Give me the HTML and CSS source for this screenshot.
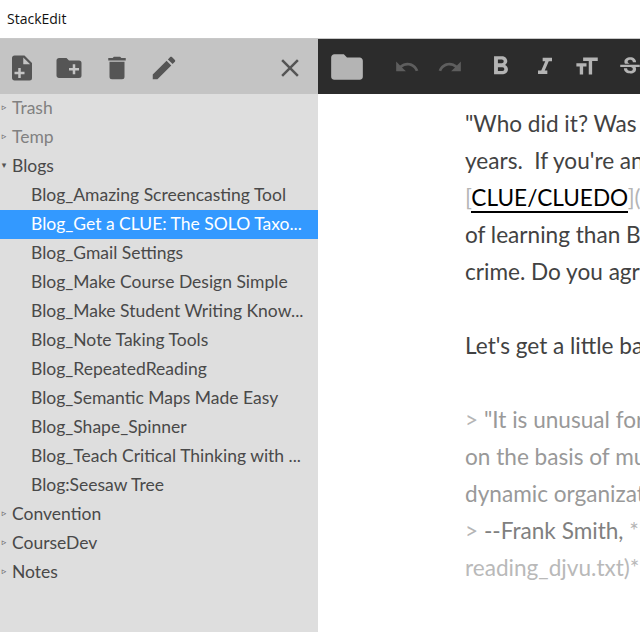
FILE: index.html
```html
<!DOCTYPE html>
<html lang="en">
<head>
<meta charset="utf-8">
<title>StackEdit</title>
<link rel="stylesheet" href="styles.css">
</head>
<body>
<div class="window">
  <header class="titlebar">StackEdit</header>
  <div class="main">
    <aside class="sidebar">
      <div class="side-tools">
        <svg class="ico" viewBox="0 0 24 24"><path d="M13,9H18.5L13,3.5V9M6,2H14L20,8V20A2,2 0 0,1 18,22H6C4.89,22 4,21.1 4,20V4C4,2.89 4.89,2 6,2M11,15V12H9V15H6V17H9V20H11V17H14V15H11Z"/></svg>
        <svg class="ico" viewBox="0 0 24 24"><path d="M10,4L12,6H20A2,2 0 0,1 22,8V18A2,2 0 0,1 20,20H4C2.89,20 2,19.1 2,18V6C2,4.89 2.89,4 4,4H10M15,9V12H12V14H15V17H17V14H20V12H17V9H15Z"/></svg>
        <svg class="ico" viewBox="0 0 24 24"><path d="M19,4H15.5L14.5,3H9.5L8.5,4H5V6H19M6,19A2,2 0 0,0 8,21H16A2,2 0 0,0 18,19V7H6V19Z"/></svg>
        <svg class="ico" viewBox="0 0 24 24"><path d="M20.71,7.04C21.1,6.65 21.1,6 20.71,5.63L18.37,3.29C18,2.9 17.35,2.9 16.96,3.29L15.12,5.12L18.87,8.87M3,17.25V21H6.75L17.81,9.93L14.06,6.18L3,17.25Z"/></svg>
        <svg class="ico close" viewBox="0 0 24 24"><path d="M19,6.41L17.59,5L12,10.59L6.41,5L5,6.41L10.59,12L5,17.59L6.41,19L12,13.41L17.59,19L19,17.59L13.41,12L19,6.41Z"/></svg>
      </div>
      <ul class="tree">
        <li class="row muted"><span class="arrow">▹</span><span class="name">Trash</span></li>
        <li class="row muted"><span class="arrow">▹</span><span class="name">Temp</span></li>
        <li class="row"><span class="arrow">▾</span><span class="name">Blogs</span></li>
        <li class="row child"><span class="name">Blog_Amazing Screencasting Tool</span></li>
        <li class="row child selected"><span class="name">Blog_Get a CLUE: The SOLO Taxo...</span></li>
        <li class="row child"><span class="name">Blog_Gmail Settings</span></li>
        <li class="row child"><span class="name">Blog_Make Course Design Simple</span></li>
        <li class="row child"><span class="name">Blog_Make Student Writing Know...</span></li>
        <li class="row child"><span class="name">Blog_Note Taking Tools</span></li>
        <li class="row child"><span class="name">Blog_RepeatedReading</span></li>
        <li class="row child"><span class="name">Blog_Semantic Maps Made Easy</span></li>
        <li class="row child"><span class="name">Blog_Shape_Spinner</span></li>
        <li class="row child"><span class="name">Blog_Teach Critical Thinking with ...</span></li>
        <li class="row child"><span class="name">Blog:Seesaw Tree</span></li>
        <li class="row"><span class="arrow">▹</span><span class="name">Convention</span></li>
        <li class="row"><span class="arrow">▹</span><span class="name">CourseDev</span></li>
        <li class="row"><span class="arrow">▹</span><span class="name">Notes</span></li>
      </ul>
    </aside>
    <section class="editor">
      <div class="edit-tools">
        <svg class="ico-folder" viewBox="0 0 24 24"><path d="M10,4H4C2.89,4 2,4.89 2,6V18A2,2 0 0,0 4,20H20A2,2 0 0,0 22,18V8C22,6.89 21.1,6 20,6H12L10,4Z"/></svg>
        <svg class="ed undo" viewBox="0 0 24 24"><path d="M12.5,8C9.85,8 7.45,9 5.6,10.6L2,7V16H11L7.38,12.38C8.77,11.22 10.54,10.5 12.5,10.5C16.04,10.5 19.05,12.81 20.1,16L22.47,15.22C21.08,11.03 17.15,8 12.5,8Z"/></svg>
        <svg class="ed redo" viewBox="0 0 24 24"><path d="M18.4,10.6C16.55,9 14.15,8 11.5,8C6.85,8 2.92,11.03 1.53,15.22L3.9,16C4.95,12.81 7.96,10.5 11.5,10.5C13.46,10.5 15.23,11.22 16.62,12.38L13,16H22V7L18.4,10.6Z"/></svg>
        <svg class="ed bold" viewBox="0 0 24 24"><path d="M13.5,15.5H10V12.5H13.5A1.5,1.5 0 0,1 15,14A1.5,1.5 0 0,1 13.5,15.5M10,6.5H13A1.5,1.5 0 0,1 14.5,8A1.5,1.5 0 0,1 13,9.5H10M15.6,10.79C16.57,10.11 17.25,9 17.25,8C17.25,5.74 15.5,4 13.25,4H7V18H14.04C16.14,18 17.75,16.3 17.75,14.21C17.75,12.69 16.89,11.39 15.6,10.79Z"/></svg>
        <svg class="ed italic" viewBox="0 0 24 24"><path d="M10,4V7H12.21L8.79,15H6V18H14V15H11.79L15.21,7H18V4H10Z"/></svg>
        <svg class="ed size" viewBox="0 0 24 24"><path d="M3,12H6V19H9V12H12V9H3M9,4V7H14V19H17V7H22V4H9Z"/></svg>
        <svg class="ed strike" viewBox="0 0 24 24"><path d="M7.24 8.75c-.26-.48-.39-1.03-.39-1.67 0-.61.13-1.16.4-1.67.26-.5.63-.93 1.11-1.29.48-.35 1.05-.63 1.7-.83.66-.19 1.39-.29 2.18-.29.81 0 1.54.11 2.21.34.66.22 1.23.54 1.69.94.47.4.83.88 1.08 1.43s.38 1.15.38 1.81h-3.01c0-.31-.05-.59-.15-.85-.09-.27-.24-.49-.44-.68-.2-.19-.45-.33-.75-.44-.3-.1-.66-.16-1.06-.16-.39 0-.74.04-1.03.13s-.53.21-.72.36c-.19.16-.34.34-.44.55-.1.21-.15.43-.15.66 0 .48.25.88.74 1.21.38.25.77.48 1.41.7H7.39c-.05-.08-.11-.17-.15-.25zM21 12v-2H3v2h9.62c.18.07.4.14.55.2.37.17.66.34.87.51s.35.36.43.57c.07.2.11.43.11.69 0 .23-.05.45-.14.66-.09.2-.23.38-.42.53-.19.15-.42.26-.71.35-.29.08-.63.13-1.01.13-.43 0-.83-.04-1.18-.13s-.66-.23-.91-.42c-.25-.19-.45-.44-.59-.75s-.25-.76-.25-1.21H6.4c0 .55.08 1.13.24 1.58.16.45.37.85.65 1.21.28.35.6.66.98.92.37.26.78.48 1.22.65.44.17.9.3 1.38.39.48.08.96.13 1.44.13.8 0 1.53-.09 2.18-.28s1.21-.45 1.67-.79c.46-.34.82-.77 1.07-1.27s.38-1.07.38-1.71c0-.6-.1-1.14-.31-1.61-.05-.11-.11-.23-.17-.33H21z"/></svg>
      </div>
      <div class="doc">
        <div class="line">"Who did it? Was</div>
        <div class="line">years.&nbsp; If you're an</div>
        <div class="line"><span class="mark">[</span><span class="link">CLUE/CLUEDO</span><span class="mark">](</span></div>
        <div class="line">of learning than B</div>
        <div class="line">crime. Do you agr</div>
        <div class="line">&nbsp;</div>
        <div class="line">Let's get a little ba</div>
        <div class="line">&nbsp;</div>
        <div class="line quote"><span class="mark">&gt;</span> "It is unusual for</div>
        <div class="line quote">on the basis of mu</div>
        <div class="line quote">dynamic organizat</div>
        <div class="line quote dark"><span class="mark">&gt;</span> --Frank Smith, <span class="mark">**</span></div>
        <div class="line faint">reading_djvu.txt)**</div>
      </div>
    </section>
  </div>
</div>
</body>
</html>
```
FILE: styles.css
```css
* { box-sizing: border-box; }
html, body { margin: 0; height: 100%; overflow: hidden; }
body { font-family: Lato, "Open Sans", sans-serif; background: #fff; }
.window { display: flex; flex-direction: column; height: 632px; }
.titlebar {
  height: 39px;
  flex: none;
  padding: 0 0 1px 7px;
  display: flex;
  align-items: center;
  font: 14px/1 "Open Sans", "Noto Sans", sans-serif;
  color: #111;
  background: #fff;
  border-bottom: 1px solid #c8c8c8;
}
.main { flex: 1; display: flex; min-height: 0; }
.sidebar { width: 318px; flex: none; background: #dedede; display: flex; flex-direction: column; }
.side-tools {
  height: 55px;
  flex: none;
  background: #c4c4c4;
  display: flex;
  align-items: center;
  padding: 2px 13px 0 7px;
  gap: 17.4px;
}
.ico { width: 30px; height: 30px; fill: #555; flex: none; }
.close { margin-left: auto; }
.tree { list-style: none; margin: 0; padding: 0; }
.row {
  height: 29px;
  display: flex;
  align-items: center;
  padding: 0 0 2px 12px;
  position: relative;
  font-size: 17.5px;
  color: #494949;
}
.row.muted { color: #818181; }
.row.child { padding-left: 31px; }
.row.selected { background: #3399ff; color: #fff; }
.name { white-space: nowrap; }
.arrow {
  position: absolute;
  left: 0;
  width: 8px;
  text-align: center;
  font: 9px/1 "DejaVu Sans", sans-serif;
  color: #555;
}
.editor { flex: 1; min-width: 0; background: #fff; overflow: hidden; display: flex; flex-direction: column; }
.edit-tools {
  height: 55px;
  flex: none;
  background: #2c2c2c;
  display: flex;
  align-items: center;
  padding-left: 10px;
  overflow: hidden;
}
.ico-folder { width: 38px; height: 38px; fill: #b4b4b4; flex: none; }
.ed { fill: #b4b4b4; flex: none; }
.undo { width: 26px; height: 26px; margin-left: 28px; fill: #5e5e5e; }
.redo { width: 26px; height: 26px; margin-left: 17px; fill: #5e5e5e; }
.bold { width: 31px; height: 31px; margin-left: 22px; }
.italic { width: 28px; height: 28px; margin-left: 15px; }
.size { width: 27px; height: 27px; margin-left: 14px; }
.strike { width: 26px; height: 26px; margin-left: 17px; }
.doc {
  padding: 11px 0 0 147px;
  font-size: 22.6px;
  line-height: 37px;
  color: #424242;
  white-space: nowrap;
}
.link { color: #000; border-bottom: 2px solid #000; }
.mark { color: #b5b5b5; }
.quote { color: #999; }
.quote.dark { color: #808080; }
.faint { color: #b9b9b9; }
```
